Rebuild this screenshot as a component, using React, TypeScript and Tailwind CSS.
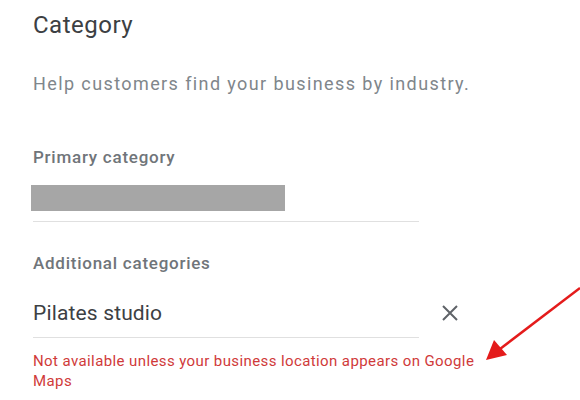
import React from "react";

function CloseIcon() {
  return (
    <svg width="18" height="18" viewBox="0 0 18 18" fill="none">
      <path d="M2 2L16 16M16 2L2 16" stroke="#5f6368" strokeWidth="2" />
    </svg>
  );
}

function Arrow() {
  return (
    <svg
      className="absolute left-0 top-0 pointer-events-none"
      width="580"
      height="400"
      viewBox="0 0 580 400"
    >
      <line x1="580" y1="288" x2="500" y2="349" stroke="#e41b1b" strokeWidth="2.5" />
      <polygon points="486,360 494,340 507,355" fill="#e41b1b" />
    </svg>
  );
}

export default function App() {
  return (
    <div
      className="relative w-[580px] h-[400px] bg-white overflow-hidden"
      style={{ fontFamily: "Roboto, 'Noto Sans', Arial, sans-serif" }}
    >
      <div className="pl-[33px] pt-[11px]">
        <h1 className="text-[24px] leading-[28px] tracking-[0.5px] text-[#3c4043]">Category</h1>

        <p className="mt-[33px] text-[18px] leading-[24px] tracking-[1.4px] text-[#80868b]">
          Help customers find your business by industry.
        </p>

        <div className="mt-[50px] text-[17px] leading-[22px] tracking-[0.75px] font-medium text-[#70757a]">
          Primary category
        </div>
        <div className="mt-[17px] w-[386px] border-b border-[#e0e0e0] pb-[10px]">
          <div className="-ml-[2px] w-[254px] h-[26px] bg-[#a6a6a6]" />
        </div>

        <div className="mt-[30px] text-[17px] leading-[22px] tracking-[0.75px] font-medium text-[#70757a]">
          Additional categories
        </div>
        <div className="mt-[26px] flex items-start">
          <div className="w-[386px] border-b border-[#e0e0e0] pb-[11px] text-[21px] leading-[26px] tracking-[0.15px] text-[#3c4043]">
            Pilates studio
          </div>
          <div className="ml-[22px] mt-[4px]">
            <CloseIcon />
          </div>
        </div>

        <p className="mt-[13px] w-[470px] text-[15px] leading-[20px] tracking-[0.4px] text-[#d03a3a]">
          Not available unless your business location appears on Google Maps
        </p>
      </div>
      <Arrow />
    </div>
  );
}
